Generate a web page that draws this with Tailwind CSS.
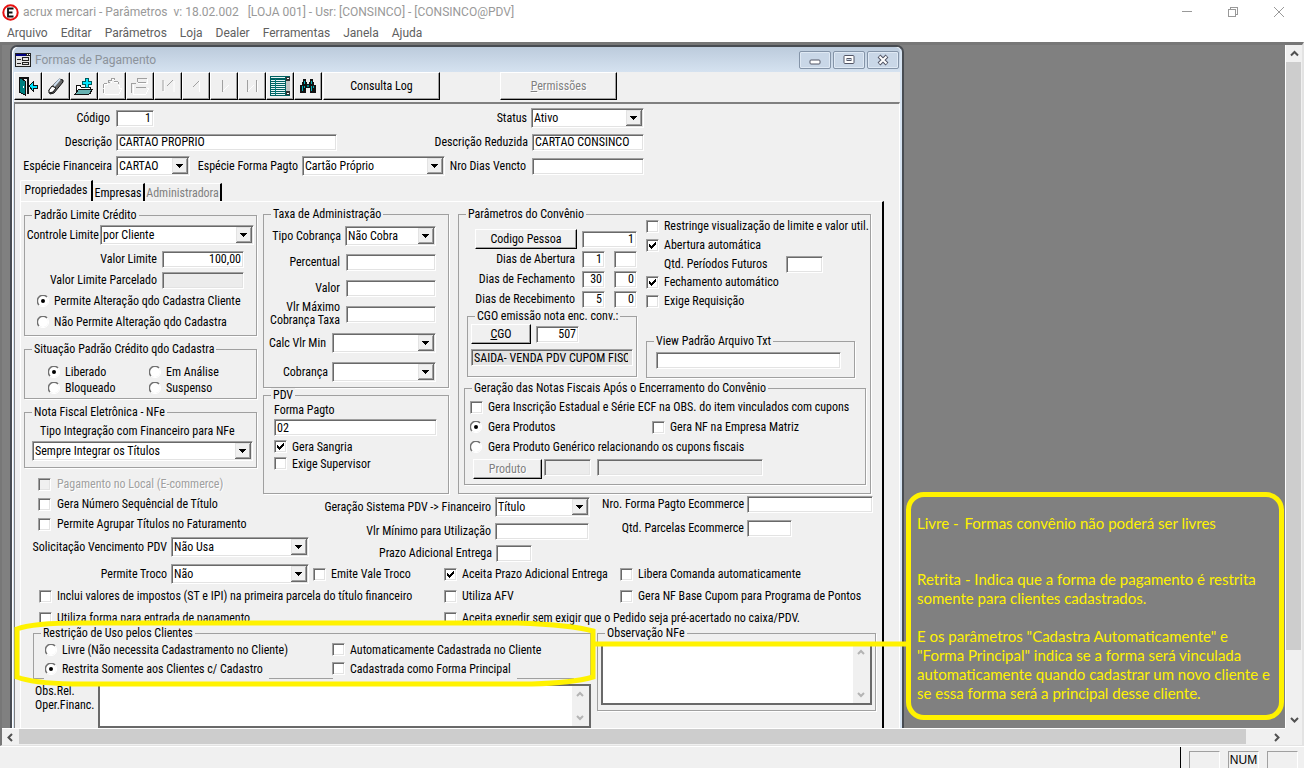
<!DOCTYPE html>
<html lang="pt-BR">
<head>
    <meta charset="UTF-8">
    <meta name="viewport" content="width=device-width, initial-scale=1.0">
    <title>acrux mercari - Parâmetros</title>
    <script src="https://cdn.jsdelivr.net/npm/@tailwindcss/browser@4"></script>

    <style>
        /* classic control faces: drop-down button, tick box, radio */
        select { appearance: none; background: #fff url("data:image/svg+xml,%3Csvg xmlns='http://www.w3.org/2000/svg' width='16' height='16' shape-rendering='crispEdges'%3E%3Cpath fill='%23696969' d='M0 0h16v16H0z'/%3E%3Cpath fill='%23e3e3e3' d='M0 0h15v15H0z'/%3E%3Cpath fill='%23a0a0a0' d='M1 1h14v14H1z'/%3E%3Cpath fill='%23f0f0f0' d='M1 1h13v13H1z'/%3E%3Cpath d='M4 6h7v1H4zM5 7h5v1H5zM6 8h3v1H6zM7 9h1v1H7z'/%3E%3C/svg%3E") no-repeat right 1px center; }
        input[type=checkbox], input[type=radio] { appearance: none; flex: none; background: center no-repeat; }
        input[type=checkbox] { width: 13px; height: 13px; background-color: #fff; border: 1px solid #fff; border-top-color: #a0a0a0; border-left-color: #a0a0a0; box-shadow: inset 1px 1px #696969, inset -1px -1px #e3e3e3; }
        input[type=checkbox]:checked { background-image: url("data:image/svg+xml,%3Csvg xmlns='http://www.w3.org/2000/svg' width='7' height='7' shape-rendering='crispEdges'%3E%3Cpath d='M0 2h1v3H0zM1 3h1v3H1zM2 4h1v3H2zM3 3h1v3H3zM4 2h1v3H4zM5 1h1v3H5zM6 0h1v3H6z'/%3E%3C/svg%3E"); }
        input[type=checkbox]:disabled { background-color: #f0f0f0; }
        input[type=radio] { width: 12px; height: 12px; background-image: url("data:image/svg+xml,%3Csvg xmlns='http://www.w3.org/2000/svg' width='12' height='12'%3E%3Ccircle cx='6' cy='6' r='5' fill='%23fff'/%3E%3Cpath d='M2 10A5.5 5.5 0 0 1 10 2' fill='none' stroke='%23707070' stroke-width='1.5'/%3E%3Cpath d='M2 10A5.5 5.5 0 0 0 10 2' fill='none' stroke='%23fff'/%3E%3C/svg%3E"); }
        input[type=radio]:checked { background-image: url("data:image/svg+xml,%3Csvg xmlns='http://www.w3.org/2000/svg' width='12' height='12'%3E%3Ccircle cx='6' cy='6' r='5' fill='%23fff'/%3E%3Cpath d='M2 10A5.5 5.5 0 0 1 10 2' fill='none' stroke='%23707070' stroke-width='1.5'/%3E%3Cpath d='M2 10A5.5 5.5 0 0 0 10 2' fill='none' stroke='%23fff'/%3E%3Ccircle cx='6' cy='6' r='2'/%3E%3C/svg%3E"); }
    </style>
</head>
<body class="flex h-screen flex-col overflow-hidden bg-[#f0f0f0] font-['Roboto_Condensed','Liberation_Sans',sans-serif] text-[12px] leading-[14px] text-black">

    <!-- Title bar -->
    <header class="flex h-6 shrink-0 items-center bg-white pl-0.5 font-['Roboto',sans-serif] text-[#999]">
        <svg class="mr-1 size-[17px]" viewBox="0 0 17 17"><circle cx="8.5" cy="8.5" r="7.2" fill="#fff" stroke="#e81010" stroke-width="2"/><path d="M11.500 4.500H6v8h5.500M6 8.500h4.500" fill="none" stroke="#111" stroke-width="1.800"/></svg>
        <h1 class="whitespace-pre">acrux mercari - Parâmetros  v: 18.02.002   [LOJA 001] - Usr: [CONSINCO] - [CONSINCO@PDV]</h1>
        <div class="ml-auto flex gap-[34px] pr-[19px]">
            <button aria-label="Minimizar"><svg class="size-3" viewBox="0 0 12 12" shape-rendering="crispEdges"><path d="M1 5h10v1H1z" fill="#999"/></svg></button>
            <button aria-label="Restaurar"><svg class="size-3" viewBox="0 0 12 12" fill="none" stroke="#999" shape-rendering="crispEdges"><path d="M1.500 3.500h7v7h-7zM3.500 3.500v-2h7v7h-2"/></svg></button>
            <button aria-label="Fechar"><svg class="size-3" viewBox="0 0 12 12" fill="none" stroke="#999"><path d="M1 1l10 10M11 1L1 11"/></svg></button>
        </div>
    </header>

    <!-- Menu -->
    <nav class="flex h-[18px] shrink-0 items-center gap-[13px] bg-white pl-[7px] font-['Roboto',sans-serif] text-[#606060]">
        <a href="#">Arquivo</a>
        <a href="#">Editar</a>
        <a href="#">Parâmetros</a>
        <a href="#">Loja</a>
        <a href="#">Dealer</a>
        <a href="#">Ferramentas</a>
        <a href="#">Janela</a>
        <a href="#">Ajuda</a>
    </nav>

    <!-- Workspace -->
    <main class="grid min-h-0 flex-1 grid-cols-[1fr_17px] grid-rows-[1fr_17px] border-2 border-t-3 border-b border-[#e3e3e3] border-t-[#777] border-l-[#777]">
        <div class="relative overflow-hidden bg-[#808080]">

            <!-- Formas de Pagamento -->
            <section class="ml-2 flex w-[894px] flex-col rounded-t-[7px] border-2 border-b-0 border-[#484c52] bg-[#d7e4f2] px-0.5 shadow-[inset_1px_1px_#fff]">
                <div class="flex h-[25px] items-center rounded-t-[5px] bg-linear-to-b from-[#bccbdc] to-[#d5e2f0] pl-px">
                    <svg class="mr-1 h-3.5 w-4" viewBox="0 0 16 14" shape-rendering="crispEdges"><path d="M0 0h16v14H0z" fill="#222"/><path d="M1 3h14v10H1z" fill="#e4e4e4"/><path d="M1 1h10v2H1z" fill="#000080"/><path d="M12 1h1v1h-1zM14 1h1v1h-1z" fill="#fff"/><path d="M2 6h4v1H2zM2 10h4v1H2zM7 4h7v1H7zM7 7h7v1H7zM7 4h1v4H7zM13 4h1v4h-1zM7 9h7v1H7zM7 11h7v1H7zM7 9h1v3H7zM13 9h1v3h-1z" fill="#222"/></svg>
                    <h2 class="font-['Roboto',sans-serif] text-[#8c939b]">Formas de Pagamento</h2>
                    <div class="ml-auto flex gap-0.5 pr-px [&>button]:flex [&>button]:h-[18px] [&>button]:w-8 [&>button]:items-center [&>button]:justify-center [&>button]:rounded-xs [&>button]:border [&>button]:border-[#8494a8] [&>button]:bg-[#c9d7e7] [&>button]:shadow-[inset_0_0_0_1px_#dfe9f4]">
                        <button aria-label="Minimizar janela"><svg class="h-3 w-3" viewBox="0 0 12 12"><rect x="1" y="6" width="10" height="4" rx="1" fill="#fff" stroke="#535666"/></svg></button>
                        <button aria-label="Maximizar janela"><svg class="h-3 w-3" viewBox="0 0 12 12" fill="#fff" stroke="#535666"><rect x="1" y="1.500" width="10" height="8" rx="1"/><rect x="4" y="4.500" width="4" height="2" fill="#c9d7e7"/></svg></button>
                        <button aria-label="Fechar janela"><svg class="h-3 w-3" viewBox="0 0 12 12"><path d="M2 2l8 8M10 2l-8 8" stroke="#535666" stroke-width="4"/><path d="M2.500 2.500l7 7M9.500 2.500l-7 7" stroke="#fff" stroke-width="2"/></svg></button>
                    </div>
                </div>

                <!-- Toolbar -->
                <div class="flex h-[30px] bg-[#f0f0f0] [&>button]:flex [&>button]:h-7 [&>button]:w-7 [&>button]:items-center [&>button]:justify-center [&>button]:border [&>button]:border-white [&>button]:border-r-black [&>button]:border-b-black [&>button]:shadow-[inset_-1px_-1px_#a0a0a0]">
                    <button aria-label="Sair"><svg class="size-5" viewBox="0 0 20 20" shape-rendering="crispEdges"><path d="M1 1h10v17H9V3H1z" fill="#111"/><path d="M1 1l6 4v14l-6-3z" fill="#008080" stroke="#111"/><path d="M5 10h1v2H5z" fill="#fff"/><path d="M11 10l4-4v3h4v3h-4v3z" fill="#00e5ff" stroke="#111"/></svg></button>
                    <button aria-label="Limpar"><svg class="size-5" viewBox="0 0 20 20"><path d="M3 14l10-11 4 1v2l-9 11-4 1z" fill="#666" stroke="#111"/><path d="M3 14l3-4 4 2-3 4-4 1z" fill="#fff" stroke="#111"/><path d="M8 10l6-7" stroke="#cde" stroke-width="2"/></svg></button>
                    <button aria-label="Incluir"><svg class="size-5" viewBox="0 0 20 20" shape-rendering="crispEdges"><path d="M2 9h4l1 2h9v6H2z" fill="#fff" stroke="#111"/><path d="M1 18l4-5h14l-4 5z" fill="#66b2b2" stroke="#111"/><path d="M11 2h3v3h3v3h-3v3h-3V8H8V5h3z" fill="#00e5ff" stroke="#005a5a"/></svg></button>
                    <button aria-label="Abrir" disabled><svg class="size-5" viewBox="0 0 20 20" fill="none" shape-rendering="crispEdges"><path d="M2 18V8h4M9 7V3h3v3h4M16 9h1v3h3l-3 6H3" stroke="#fff"/><path d="M1 17V8l1-1h3M8 6H6V4h3V2h3v2M12 5h4v3" stroke="#a0a0a0" stroke-dasharray="4 1"/></svg></button>
                    <button aria-label="Remover" disabled><svg class="size-5" viewBox="0 0 20 20" fill="none" shape-rendering="crispEdges"><path d="M8 7h9V3M3 18V9M17 12h2l-3 6H3" stroke="#fff"/><path d="M7 6V2h9v1M1 17V8l1-1h4M6 11h10M8 6h8" stroke="#a0a0a0"/></svg></button>
                    <button aria-label="Primeiro" disabled><svg class="size-5" viewBox="0 0 20 20" fill="none"><path d="M6 5v11M16 5v11" stroke="#fff"/><path d="M5 4v11M15 4l-6 6" stroke="#a0a0a0"/></svg></button>
                    <button aria-label="Anterior" disabled><svg class="size-5" viewBox="0 0 20 20" fill="none"><path d="M13.500 5v11" stroke="#fff"/><path d="M13 5l-6 6" stroke="#a0a0a0"/></svg></button>
                    <button aria-label="Próximo" disabled><svg class="size-5" viewBox="0 0 20 20" fill="none"><path d="M9 15l6-6" stroke="#fff"/><path d="M8.500 4v12" stroke="#a0a0a0"/></svg></button>
                    <button aria-label="Último" disabled><svg class="size-5" viewBox="0 0 20 20" fill="none"><path d="M6 15l6-6M15.500 5v11" stroke="#fff"/><path d="M5.500 4v12M14.500 4v12" stroke="#a0a0a0"/></svg></button>
                    <button aria-label="Lista"><svg class="size-[22px]" viewBox="0 0 22 22" shape-rendering="crispEdges"><path d="M1 1h20v20H1z" fill="#006060"/><path d="M2 5h14v1H2zM2 7h14v1H2zM2 9h14v1H2zM2 11h14v1H2zM2 13h14v1H2zM2 15h14v1H2zM2 17h14v1H2zM2 19h14v1H2zM2 2h14v1H2z" fill="#e8f8f8"/><path d="M6 4h1v16H6z" fill="#008080"/><path d="M17 2h4v18h-4z" fill="#c4c4c4"/><path d="M17 2h4v4h-4zM17 16h4v4h-4z" fill="#333"/><path d="M18 3h2v1h-2zM18 18h2v1h-2z" fill="#fff"/></svg></button>
                    <button aria-label="Procurar"><svg class="size-5" viewBox="0 0 20 20" shape-rendering="crispEdges"><path d="M5 3h3v3h1v2h2V6h1V3h3v3h1v3h2v8h-6v-5H8v5H2V9h2V6h1z" fill="#111"/><path d="M6 5h1v3H6zM4 10h1v5H4zM6 10h1v2H6zM13 5h1v3h-1zM13 10h1v5h-1zM15 10h1v2h-1z" fill="#00b0b8"/><path d="M9 9h2v2H9z" fill="#008080"/></svg></button>
                    <button class="ml-px min-w-[117px]">Consulta Log</button>
                    <button disabled class="ml-[60px] min-w-[117px] text-[#808080] text-shadow-[1px_1px_0_#fff]"><span><u>P</u>ermissões</span></button>
                </div>

                <form class="border border-t-2 border-[#fff] border-t-[#808080] border-l-[#808080] bg-[#f0f0f0] whitespace-nowrap [&_button]:h-5 [&_button]:border [&_button]:border-white [&_button]:border-r-black [&_button]:border-b-black [&_button]:shadow-[inset_-1px_-1px_#a0a0a0] [&_fieldset]:min-w-0 [&_fieldset]:border [&_fieldset]:border-[#a0a0a0] [&_fieldset]:shadow-[1px_1px_#fff] [&_input[type=text]]:h-[17px] [&_input[type=text]]:border [&_input[type=text]]:border-white [&_input[type=text]]:border-t-[#a0a0a0] [&_input[type=text]]:border-l-[#a0a0a0] [&_input[type=text]]:bg-white [&_input[type=text]]:px-0.5 [&_input[type=text]]:shadow-[inset_1px_1px_#696969,inset_-1px_-1px_#e3e3e3] [&_input[type=text]:disabled]:bg-[#ececec] [&_legend]:ml-[7px] [&_legend]:bg-[#f0f0f0] [&_legend]:px-0.5 [&_select]:h-5 [&_select]:border [&_select]:border-white [&_select]:border-t-[#a0a0a0] [&_select]:border-l-[#a0a0a0] [&_select]:pl-0.5 [&_select]:shadow-[inset_1px_1px_#696969,inset_-1px_-1px_#e3e3e3]">

                    <div class="flex w-[629px] flex-col gap-1 pt-1">
                        <div class="flex h-5 items-center justify-between">
                            <div class="flex items-center gap-1">
                                <label for="codigo" class="w-[97px] pr-0.5 text-right">Código</label>
                                <input id="codigo" type="text" value="1" class="w-[38px] text-right">
                            </div>
                            <div class="flex items-center gap-1">
                                <label for="status">Status</label>
                                <select id="status" class="w-[113px]"><option>Ativo</option></select>
                            </div>
                        </div>
                        <div class="flex h-5 items-center justify-between">
                            <div class="flex items-center gap-1">
                                <label for="descricao" class="w-[97px] text-right">Descrição</label>
                                <input id="descricao" type="text" value="CARTAO PROPRIO" class="w-[221px]">
                            </div>
                            <div class="flex items-center gap-1">
                                <label for="reduzida">Descrição Reduzida</label>
                                <input id="reduzida" type="text" value="CARTAO CONSINCO" class="w-[112px]">
                            </div>
                        </div>
                        <div class="flex h-5 items-center justify-between">
                            <div class="flex items-center gap-1">
                                <label for="especie" class="w-[97px] text-right">Espécie Financeira</label>
                                <select id="especie" class="w-[74px]"><option>CARTAO</option></select>
                                <label for="forma" class="w-[104px] text-right">Espécie Forma Pagto</label>
                                <select id="forma" class="w-[143px]"><option>Cartão Próprio</option></select>
                            </div>
                            <div class="flex items-center gap-1.5">
                                <label for="vencto">Nro Dias Vencto</label>
                                <input id="vencto" type="text" class="w-[112px]">
                            </div>
                        </div>
                    </div>

                    <!-- Tabs -->
                    <div role="tablist" class="mt-1 ml-[5px] flex items-end [&>a]:border-t [&>a]:border-r-2 [&>a]:border-t-white [&>a]:border-r-black [&>a]:px-[3px]">
                        <a href="#" role="tab" aria-selected="true" class="flex h-[21px] w-[73px] items-center justify-center rounded-tl-xs border-l border-l-white pb-0.5">Propriedades</a>
                        <a href="#" role="tab" class="flex h-[18px] w-[52px] items-center justify-center">Empresas</a>
                        <a href="#" role="tab" class="flex h-[18px] w-[77px] items-center justify-center text-[#808080]">Administradora</a>
                    </div>

                    <div role="tabpanel" class="mr-[15px] ml-[5px] border-t border-r-2 border-l border-t-white border-r-black border-l-white">
                        <div class="flex pt-[5px] pl-[3px]">

                            <!-- Credit column -->
                            <div class="flex w-[233px] flex-col gap-1.5 pt-px">
                                <fieldset>
                                    <legend>Padrão Limite Crédito</legend>
                                    <div class="flex flex-col gap-px pt-[3px] pb-[3px]">
                                        <div class="mb-[3px] flex h-5 items-center justify-end gap-px pr-0.5">
                                            <label for="controle">Controle Limite</label>
                                            <select id="controle" class="w-[154px]"><option>por Cliente</option></select>
                                        </div>
                                        <div class="flex h-5 items-center justify-end gap-[5px] pr-3">
                                            <label for="vlimite">Valor Limite</label>
                                            <input id="vlimite" type="text" value="100,00" class="w-[82px] text-right">
                                        </div>
                                        <div class="flex h-5 items-center justify-end gap-[5px] pr-3">
                                            <label for="vparc">Valor Limite Parcelado</label>
                                            <input id="vparc" type="text" disabled class="w-[82px]">
                                        </div>
                                        <label class="flex h-5 items-center gap-[5px] pl-3"><input type="radio" name="alt" checked>Permite Alteração qdo Cadastra Cliente</label>
                                        <label class="flex h-5 items-center gap-[5px] pl-3"><input type="radio" name="alt">Não Permite Alteração qdo Cadastra</label>
                                    </div>
                                </fieldset>
                                <fieldset>
                                    <legend>Situação Padrão Crédito qdo Cadastra</legend>
                                    <div class="grid grid-cols-[101px_1fr] pt-2 pb-0.5 pl-[23px]">
                                        <label class="flex h-4 items-center gap-[5px]"><input type="radio" name="sit" checked>Liberado</label>
                                        <label class="flex h-4 items-center gap-[5px]"><input type="radio" name="sit">Em Análise</label>
                                        <label class="flex h-4 items-center gap-[5px]"><input type="radio" name="sit">Bloqueado</label>
                                        <label class="flex h-4 items-center gap-[5px]"><input type="radio" name="sit">Suspenso</label>
                                    </div>
                                </fieldset>
                                <fieldset>
                                    <legend>Nota Fiscal Eletrônica - NFe</legend>
                                    <div class="flex flex-col pt-0.5 pr-[3px] pb-1.5 pl-[7px]">
                                        <label for="integra" class="pt-[3px] pb-[3px] pl-2">Tipo Integração com Financeiro para NFe</label>
                                        <select id="integra"><option>Sempre Integrar os Títulos</option></select>
                                    </div>
                                </fieldset>
                                <div class="pl-3.5">
                                    <label class="flex h-5 items-center gap-[6px] text-[#a0a0a0] text-shadow-[1px_1px_0_#fff]"><input type="checkbox" disabled>Pagamento no Local (E-commerce)</label>
                                    <label class="flex h-5 items-center gap-[6px]"><input type="checkbox">Gera Número Sequêncial de Título</label>
                                    <label class="flex h-5 items-center gap-[6px]"><input type="checkbox">Permite Agrupar Títulos no Faturamento</label>
                                </div>
                                <div class="-mt-[3px] flex h-5 items-center gap-1">
                                    <label for="solic" class="w-[143px] shrink-0 text-right">Solicitação Vencimento PDV</label>
                                    <select id="solic" class="w-[138px] shrink-0"><option>Não Usa</option></select>
                                </div>
                            </div>

                            <div class="ml-1.5">
                                <div class="flex gap-[9px]">
                                    <div class="w-[186px]">
                                        <fieldset>
                                            <legend>Taxa de Administração</legend>
                                            <div class="flex flex-col gap-1.5 pt-[5px] pr-3 pb-[5px]">
                                                <div class="flex h-5 items-center justify-end gap-1">
                                                    <label for="tipo">Tipo Cobrança</label>
                                                    <select id="tipo" class="w-[91px]"><option>Não Cobra</option></select>
                                                </div>
                                                <div class="flex h-5 items-center justify-end gap-1.5">
                                                    <label for="perc">Percentual</label>
                                                    <input id="perc" type="text" class="w-[90px]">
                                                </div>
                                                <div class="flex h-5 items-center justify-end gap-1.5">
                                                    <label for="valor">Valor</label>
                                                    <input id="valor" type="text" class="w-[90px]">
                                                </div>
                                                <div class="flex h-5 items-center justify-end gap-1.5">
                                                    <label for="vmax" class="text-right leading-[13px]">Vlr Máximo<br>Cobrança Taxa</label>
                                                    <input id="vmax" type="text" class="w-[90px]">
                                                </div>
                                                <div class="mt-[3px] flex h-5 items-center justify-end gap-1.5">
                                                    <label for="vmin">Calc Vlr Min</label>
                                                    <select id="vmin" class="w-[104px]"><option></option></select>
                                                </div>
                                                <div class="mt-[3px] flex h-5 items-center justify-end gap-1">
                                                    <label for="cobr">Cobrança</label>
                                                    <select id="cobr" class="w-[104px]"><option></option></select>
                                                </div>
                                            </div>
                                        </fieldset>
                                        <fieldset>
                                            <legend>PDV</legend>
                                            <div class="flex flex-col pt-px pr-[11px] pb-[21px] pl-2.5">
                                                <label for="pagto">Forma Pagto</label>
                                                <input id="pagto" type="text" value="02" class="mt-0.5 mb-0.5">
                                                <label class="flex h-[17px] items-center gap-[5px]"><input type="checkbox" checked>Gera Sangria</label>
                                                <label class="flex h-[17px] items-center gap-[5px]"><input type="checkbox">Exige Supervisor</label>
                                            </div>
                                        </fieldset>
                                    </div>

                                    <!-- Agreement parameters -->
                                    <fieldset class="w-[413px]">
                                        <legend>Parâmetros do Convênio</legend>
                                        <div class="flex items-start gap-[9px]">
                                            <div class="w-[178px] pt-2">
                                                <div class="flex h-5 items-center justify-end gap-[5px]">
                                                    <button type="button" class="w-[102px]">Codigo Pessoa</button>
                                                    <input type="text" aria-label="Codigo Pessoa" value="1" class="w-[55px] text-right">
                                                </div>
                                                <div class="flex h-5 items-center justify-end gap-[7px]">
                                                    <label for="abert">Dias de Abertura</label>
                                                    <input id="abert" type="text" value="1" class="mr-0.5 w-[23px] text-right">
                                                    <input type="text" aria-label="Dias de Abertura 2" class="w-[23px]">
                                                </div>
                                                <div class="flex h-5 items-center justify-end gap-[7px]">
                                                    <label for="fech">Dias de Fechamento</label>
                                                    <input id="fech" type="text" value="30" class="mr-0.5 w-[23px] text-right">
                                                    <input type="text" aria-label="Dias de Fechamento 2" value="0" class="w-[23px] text-right">
                                                </div>
                                                <div class="flex h-5 items-center justify-end gap-[7px]">
                                                    <label for="receb">Dias de Recebimento</label>
                                                    <input id="receb" type="text" value="5" class="mr-0.5 w-[23px] text-right">
                                                    <input type="text" aria-label="Dias de Recebimento 2" value="0" class="w-[23px] text-right">
                                                </div>
                                                <fieldset class="ml-2">
                                                    <legend>CGO emissão nota enc. conv.:</legend>
                                                    <div class="pt-px pb-2.5 pl-[3px]">
                                                        <div class="flex h-5 items-center gap-[5px]">
                                                            <button type="button" class="w-[60px]"><u>C</u>GO</button>
                                                            <input type="text" aria-label="CGO" value="507" class="w-[43px] text-right">
                                                        </div>
                                                        <input type="text" aria-label="Descrição CGO" value="SAIDA- VENDA PDV CUPOM FISCAL" readonly class="mt-[5px] block w-[162px] bg-[#e3e3e3]! pr-1!">
                                                    </div>
                                                </fieldset>
                                            </div>
                                            <div class="-mt-1">
                                                <label class="flex h-[18px] items-center gap-[5px]"><input type="checkbox">Restringe visualização de limite e valor util.</label>
                                                <label class="mt-px flex h-[18px] items-center gap-[5px]"><input type="checkbox" checked>Abertura automática</label>
                                                <div class="mt-px flex h-[18px] items-center pl-[18px]">
                                                    <label for="periodos" class="w-[122px]">Qtd. Períodos Futuros</label>
                                                    <input id="periodos" type="text" class="w-[37px]">
                                                </div>
                                                <label class="flex h-[18px] items-center gap-[5px]"><input type="checkbox" checked>Fechamento automático</label>
                                                <label class="mt-px flex h-[18px] items-center gap-[5px]"><input type="checkbox">Exige Requisição</label>
                                                <fieldset class="mt-6 w-[209px]">
                                                    <legend>View Padrão Arquivo Txt</legend>
                                                    <div class="px-[9px] pt-1 pb-2"><input type="text" aria-label="View Padrão Arquivo Txt" class="block w-[185px]"></div>
                                                </fieldset>
                                            </div>
                                        </div>
                                        <fieldset class="mt-[3px] mr-1 mb-1.5 ml-[5px]">
                                            <legend>Geração das Notas Fiscais Após o Encerramento do Convênio</legend>
                                            <div class="pt-0.5 pb-[5px] pl-[5px]">
                                                <label class="flex h-5 items-center gap-[5px]"><input type="checkbox">Gera Inscrição Estadual e Série ECF na OBS. do item vinculados com cupons</label>
                                                <div class="grid h-5 grid-cols-[182px_1fr] items-center">
                                                    <label class="flex items-center gap-1.5"><input type="radio" name="ger" checked>Gera Produtos</label>
                                                    <label class="flex items-center gap-[5px]"><input type="checkbox">Gera NF na Empresa Matriz</label>
                                                </div>
                                                <label class="flex h-5 items-center gap-1.5"><input type="radio" name="ger">Gera Produto Genérico relacionando os cupons fiscais</label>
                                                <div class="mt-0.5 flex gap-0.5 pl-[3px]">
                                                    <button type="button" disabled class="w-[69px] text-[#808080] text-shadow-[1px_1px_0_#fff]">Produto</button>
                                                    <input type="text" aria-label="Código do produto" disabled class="mr-1 w-[47px]">
                                                    <input type="text" aria-label="Nome do produto" disabled class="w-[166px]">
                                                </div>
                                            </div>
                                        </fieldset>
                                    </fieldset>
                                </div>

                                <div class="flex gap-3">
                                    <div class="w-[327px] pt-[3px]">
                                        <div class="flex h-5 items-center gap-1">
                                            <label for="geracao" class="w-[228px] text-right">Geração Sistema PDV -&gt; Financeiro</label>
                                            <select id="geracao" class="w-[95px]"><option>Título</option></select>
                                        </div>
                                        <div class="mt-1 flex h-5 items-center gap-1">
                                            <label for="minimo" class="w-[228px] text-right">Vlr Mínimo para Utilização</label>
                                            <input id="minimo" type="text" class="w-[94px]">
                                        </div>
                                        <div class="mt-0.5 flex h-5 items-center gap-1">
                                            <label for="prazo" class="w-[229px] text-right">Prazo Adicional Entrega</label>
                                            <input id="prazo" type="text" class="w-9">
                                        </div>
                                    </div>
                                    <div>
                                        <div class="flex h-5 items-center gap-[3px]">
                                            <label for="ecom" class="w-[142px] text-right">Nro. Forma Pagto Ecommerce</label>
                                            <input id="ecom" type="text" class="w-[126px]">
                                        </div>
                                        <div class="mt-1 flex h-5 items-center gap-[3px]">
                                            <label for="parc" class="w-[142px] text-right">Qtd. Parcelas Ecommerce</label>
                                            <input id="parc" type="text" class="w-[45px]">
                                        </div>
                                    </div>
                                </div>
                            </div>
                        </div>

                        <div class="grid grid-cols-[405px_176px_1fr] gap-y-0.5 pt-px pl-[18px]">
                            <div class="flex h-5 items-center gap-1">
                                <label for="troco" class="w-[128px] text-right">Permite Troco</label>
                                <select id="troco" class="w-[138px]"><option>Não</option></select>
                                <label class="flex items-center gap-[5px]"><input type="checkbox">Emite Vale Troco</label>
                            </div>
                            <label class="flex h-5 items-center gap-[5px]"><input type="checkbox" checked>Aceita Prazo Adicional Entrega</label>
                            <label class="flex h-5 items-center gap-[5px]"><input type="checkbox">Libera Comanda automaticamente</label>
                            <label class="flex h-5 items-center gap-[5px]"><input type="checkbox">Inclui valores de impostos (ST e IPI) na primeira parcela do título financeiro</label>
                            <label class="flex h-5 items-center gap-[5px]"><input type="checkbox">Utiliza AFV</label>
                            <label class="flex h-5 items-center gap-[5px]"><input type="checkbox">Gera NF Base Cupom para Programa de Pontos</label>
                            <label class="flex h-5 items-center gap-[5px]"><input type="checkbox">Utiliza forma para entrada de pagamento</label>
                            <label class="col-span-2 flex h-5 items-center gap-[5px]"><input type="checkbox">Aceita expedir sem exigir que o Pedido seja pré-acertado no caixa/PDV.</label>
                        </div>

                        <div class="-mt-0.5 flex gap-1.5 pb-4 pl-3">
                            <div class="w-[558px]">
                                <fieldset class="border-b-0! shadow-none!">
                                    <legend>Restrição de Uso pelos Clientes</legend>
                                    <div class="grid grid-cols-[287px_1fr] pl-[11px]">
                                        <label class="flex h-[19px] items-center gap-[5px]"><input type="radio" name="uso">Livre (Não necessita Cadastramento no Cliente)</label>
                                        <label class="flex h-[19px] items-center gap-[5px]"><input type="checkbox">Automaticamente Cadastrada no Cliente</label>
                                        <label class="flex h-[19px] items-center gap-[5px]"><input type="radio" name="uso" checked>Restrita Somente aos Clientes c/ Cadastro</label>
                                        <label class="flex h-[19px] items-center gap-[5px]"><input type="checkbox">Cadastrada como Forma Principal</label>
                                    </div>
                                    <div class="grid grid-cols-[10px_225px_64px_184px_57px]">
                                        <span class="h-px bg-[#a0a0a0]"></span><span></span><span class="h-px bg-[#a0a0a0]"></span><span></span><span class="h-px bg-[#a0a0a0]"></span>
                                    </div>
                                </fieldset>
                                <div class="mt-[5px] flex">
                                    <label for="obsrel" class="w-[65px] shrink-0 pl-0.5">Obs.Rel.<br>Oper.Financ.</label>
                                    <div class="flex h-11 flex-1 border-2 border-[#696969] bg-white">
                                        <textarea id="obsrel" class="flex-1 resize-none"></textarea>
                                        <div class="flex w-[17px] flex-col justify-between bg-[#f0f0f0] p-1">
                                            <svg class="h-2 w-2" viewBox="0 0 8 8" fill="none" stroke="#b4b4b4" stroke-width="2"><path d="M1 6l3-3 3 3"/></svg>
                                            <svg class="h-2 w-2" viewBox="0 0 8 8" fill="none" stroke="#b4b4b4" stroke-width="2"><path d="M1 2l3 3 3-3"/></svg>
                                        </div>
                                    </div>
                                </div>
                            </div>
                            <fieldset class="h-[85px] w-[279px]">
                                <legend>Observação NFe</legend>
                                <div class="mx-[3px] mt-0.5 flex h-[63px] border-2 border-[#696969] bg-white">
                                    <textarea aria-label="Observação NFe" class="flex-1 resize-none"></textarea>
                                    <div class="flex w-[17px] flex-col justify-between bg-[#f0f0f0] p-1">
                                        <svg class="h-2 w-2" viewBox="0 0 8 8" fill="none" stroke="#b4b4b4" stroke-width="2"><path d="M1 6l3-3 3 3"/></svg>
                                        <svg class="h-2 w-2" viewBox="0 0 8 8" fill="none" stroke="#b4b4b4" stroke-width="2"><path d="M1 2l3 3 3-3"/></svg>
                                    </div>
                                </div>
                            </fieldset>
                        </div>
                    </div>
                </form>
            </section>

            <!-- Highlight and callout over the window -->
            <svg class="pointer-events-none absolute top-[572px] left-[10px] h-[74px] w-[900px]" viewBox="0 0 900 74" fill="none" stroke="#fff200" stroke-width="5">
                <path d="M5 12Q20 6 68 6H505Q560 8 581 14V60Q560 66 520 67H60Q20 66 5 60Z"/>
                <path d="M580 27H900"/>
            </svg>
            <aside class="absolute top-[447px] left-[904px] h-[228px] w-[378px] rounded-[18px] border-[5px] border-[#fff200] bg-[#808080] pt-[17px] pl-1.5 font-['Lato',sans-serif] text-[15px] leading-[19px] whitespace-nowrap text-[#fff200]">
                <p class="flex gap-1.5"><span>Livre -</span><span>Formas convênio não poderá ser livres</span></p>
                <p class="mt-[37px]">Retrita - Indica que a forma de pagamento é restrita<br>somente para clientes cadastrados.</p>
                <p class="mt-[19px]">E os parâmetros "Cadastra Automaticamente" e<br>"Forma Principal" indica se a forma será vinculada<br>automaticamente quando cadastrar um novo cliente e<br>se essa forma será a principal desse cliente.</p>
            </aside>
        </div>

        <!-- Vertical scrollbar -->
        <div class="flex flex-col items-center border-l border-white bg-[#f0f0f0]">
            <svg class="h-[17px] w-[17px] shrink-0" viewBox="0 0 17 17" fill="none" stroke="#505050" stroke-width="2"><path d="M5 10.500l3.500-3.500 3.500 3.500"/></svg>
            <div class="w-[15px] flex-[588] self-start bg-[#cdcdcd]"></div>
            <div class="flex-[61]"></div>
            <svg class="h-[17px] w-[17px] shrink-0" viewBox="0 0 17 17" fill="none" stroke="#505050" stroke-width="2"><path d="M5 7l3.500 3.500L12 7"/></svg>
        </div>

        <!-- Horizontal scrollbar -->
        <div class="flex items-center border-t border-white bg-[#f0f0f0]">
            <svg class="h-[17px] w-[17px] shrink-0" viewBox="0 0 17 17" fill="none" stroke="#505050" stroke-width="2"><path d="M10 5L6.500 8.500 10 12"/></svg>
            <div class="h-[15px] flex-[1226] self-start bg-[#cdcdcd]"></div>
            <div class="flex-[22]"></div>
            <svg class="h-[17px] w-[17px] shrink-0" viewBox="0 0 17 17" fill="none" stroke="#505050" stroke-width="2"><path d="M7 5l3.500 3.500L7 12"/></svg>
        </div>
        <div class="bg-[#f0f0f0]"></div>
    </main>

    <!-- Status bar -->
    <footer class="flex h-[22px] shrink-0 justify-end gap-2 border-t border-white pr-1.5 font-['Liberation_Sans',sans-serif] text-[12px]">
        <div class="w-px bg-black"></div>
        <div class="mt-1 w-[31px] border border-b-0 border-white border-t-[#a0a0a0] border-l-[#a0a0a0]"></div>
        <div class="mt-1 w-[31px] border border-b-0 border-white border-t-[#a0a0a0] border-l-[#a0a0a0] pt-px text-center">NUM</div>
        <div class="mt-1 w-[31px] border border-b-0 border-white border-t-[#a0a0a0] border-l-[#a0a0a0]"></div>
    </footer>

</body>
</html>
